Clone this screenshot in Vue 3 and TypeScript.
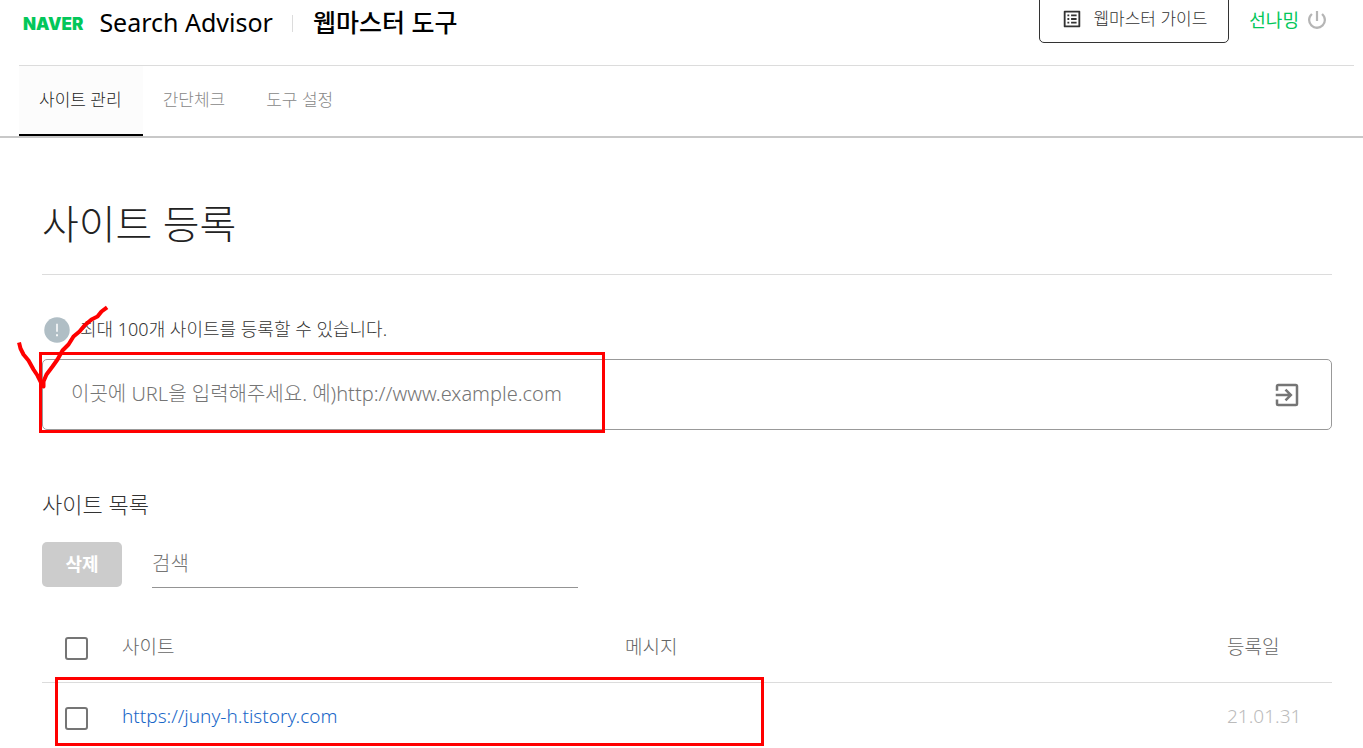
<script setup lang="ts">
import { ref } from 'vue'

interface Tab {
  label: string
  active: boolean
}
interface Site {
  url: string
  message: string
  date: string
}

const tabs: Tab[] = [
  { label: '사이트 관리', active: true },
  { label: '간단체크', active: false },
  { label: '도구 설정', active: false },
]
const sites: Site[] = [{ url: 'https://juny-h.tistory.com', message: '', date: '21.01.31' }]
const siteUrl = ref('')
const keyword = ref('')
</script>

<template>
  <div class="page">
    <header class="header">
      <div class="topbar">
        <a class="logo" href="#">NAVER</a>
        <a class="service" href="#">Search Advisor</a>
        <span class="divider"></span>
        <a class="tool" href="#">웹마스터 도구</a>
        <a class="guide" href="#">
          <svg width="22" height="22" viewBox="0 0 24 24" aria-hidden="true">
            <path fill="#333" d="M11 7h6v2h-6zm0 4h6v2h-6zm0 4h6v2h-6zM7 7h2v2H7zm0 4h2v2H7zm0 4h2v2H7zM20.1 3H3.9c-.5 0-.9.4-.9.9v16.2c0 .4.4.9.9.9h16.2c.4 0 .9-.5.9-.9V3.9c0-.5-.5-.9-.9-.9zM19 19H5V5h14z" />
          </svg>
          <span>웹마스터 가이드</span>
        </a>
        <a class="user" href="#">선나밍</a>
        <button class="power" type="button" aria-label="로그아웃">
          <svg width="24" height="24" viewBox="0 0 24 24" aria-hidden="true">
            <path fill="#b5b5b5" d="M13.100 3h-2.200v10h2.200zm4.730 2.170-1.560 1.560A6.700 6.700 0 0 1 18.700 12a6.700 6.700 0 1 1-10.970-5.270L6.170 5.170A8.932 8.932 0 0 0 3 12a9 9 0 0 0 18 0c0-2.740-1.230-5.180-3.170-6.830z" />
          </svg>
        </button>
      </div>
      <nav class="tabs">
        <a v-for="tab in tabs" :key="tab.label" href="#" class="tab" :class="{ active: tab.active }">{{ tab.label }}</a>
      </nav>
    </header>

    <main class="content">
      <h1 class="title">사이트 등록</h1>

      <p class="notice">
        <svg width="30" height="30" viewBox="0 0 24 24" aria-hidden="true">
          <circle cx="12" cy="12" r="10.2" fill="#b0bec5" />
          <path fill="#fff" d="M11.4 7h1.2v6.4h-1.2zM11.3 15.3h1.4v1.6h-1.4z" />
        </svg>
        <span>최대 100개 사이트를 등록할 수 있습니다.</span>
      </p>

      <form class="field" @submit.prevent>
        <input v-model="siteUrl" class="url" type="text" aria-label="사이트 URL" placeholder="이곳에 URL을 입력해주세요. 예)http://www.example.com" />
        <button class="enter" type="submit" aria-label="등록">
          <svg width="30" height="30" viewBox="0 0 24 24" aria-hidden="true">
            <path fill="#757575" d="M19 3H5a2 2 0 0 0-2 2v3.500h2V5h14v14H5v-3.500H3V19a2 2 0 0 0 2 2h14a2 2 0 0 0 2-2V5a2 2 0 0 0-2-2zm-8.920 12.590L11.500 17l5-5-5-5-1.420 1.410L12.670 11H3v2h9.670z" />
          </svg>
        </button>
      </form>

      <h2 class="subtitle">사이트 목록</h2>

      <div class="toolbar">
        <button class="remove" type="button">삭제</button>
        <input v-model="keyword" class="search" type="text" aria-label="검색" placeholder="검색" />
      </div>

      <table class="sites">
        <colgroup>
          <col class="col-check" />
          <col class="col-site" />
          <col />
          <col class="col-date" />
        </colgroup>
        <thead>
          <tr>
            <th class="check"><input type="checkbox" aria-label="전체 선택" /></th>
            <th>사이트</th>
            <th>메시지</th>
            <th>등록일</th>
          </tr>
        </thead>
        <tbody>
          <tr v-for="site in sites" :key="site.url">
            <td class="check"><input type="checkbox" :aria-label="site.url" /></td>
            <td><a class="link" :href="site.url">{{ site.url }}</a></td>
            <td>{{ site.message }}</td>
            <td class="date">{{ site.date }}</td>
          </tr>
        </tbody>
      </table>
    </main>

    <!-- Hand-drawn marks laid over the page -->
    <svg class="marks" width="780" height="748" viewBox="0 0 780 748" fill="none" stroke="#ff0000" aria-hidden="true">
      <rect x="40.500" y="353.500" width="563" height="78" stroke-width="3" />
      <rect x="56.500" y="678.500" width="706" height="66" stroke-width="3" />
      <path stroke-width="4" stroke-linecap="square" stroke-linejoin="round" d="M19.500 344.500l1 4 3 6 5 6 5 9 4 6 4 8 2 3v-5l3-7 6-8 5-7 5-9 6-6 5-8 6-5 5-6 7-6 6-3 4-5 4-3" />
    </svg>
  </div>
</template>

<style>
body {
  margin: 0;
  background: #fff;
}
</style>

<style scoped>
.page {
  position: relative;
  overflow: hidden;
  font-family: "Noto Sans", "Noto Sans CJK KR", sans-serif;
  font-weight: 300;
  color: #333;
}
a {
  color: inherit;
  text-decoration: none;
}
button {
  padding: 0;
  border: 0;
  background: none;
  font: inherit;
}
svg {
  display: block;
  flex: none;
}
input {
  font: inherit;
  color: inherit;
}
.header {
  padding-left: 19px;
  border-bottom: 2px solid #c8c8c8;
}
.topbar {
  display: flex;
  align-items: center;
  box-sizing: border-box;
  height: 66px;
  margin-right: 9px;
  padding: 0 25px 22px 4px;
  border-bottom: 1px solid #dcdcdc;
  line-height: 24px;
}
.logo {
  margin-top: 4px;
  font: 900 17px/24px Inter, sans-serif;
  color: #03c75a;
}
.service {
  margin-left: 16px;
  font-size: 25px;
  font-weight: 400;
  color: #000;
}
.divider {
  width: 1px;
  height: 17px;
  margin: 4px 20px 0 19px;
  background: #dcdcdc;
}
.tool {
  font-size: 25px;
  font-weight: 500;
  color: #000;
}
.guide {
  display: flex;
  align-items: center;
  gap: 10px;
  box-sizing: border-box;
  height: 48px;
  margin-left: auto;
  margin-top: -5px;
  padding: 0 21px;
  border: 1px solid #333;
  border-radius: 5px;
  font-size: 17px;
}
.user {
  margin: 0 6px 4px 20px;
  font-size: 18px;
  font-weight: 400;
  color: #03c75a;
}
.power {
  margin-bottom: 4px;
}
.tabs {
  display: flex;
}
.tab {
  padding: 0 21px 0 20px;
  border-bottom: 2px solid transparent;
  font-size: 17px;
  line-height: 68px;
  color: #888;
}
.tab.active {
  border-color: #000;
  background: #fcfcfc;
  color: #222;
}
.content {
  padding: 50px 31px 0 42px;
}
.title {
  margin: 0;
  padding-bottom: 14px;
  border-bottom: 1px solid #dcdcdc;
  font-size: 40px;
  font-weight: 300;
  line-height: 72px;
  color: #222;
}
.notice {
  display: flex;
  align-items: center;
  gap: 8px;
  margin: 40px 0 14px;
  font-size: 18px;
  line-height: 28px;
}
.notice span {
  padding-bottom: 2px;
}
.field {
  display: flex;
  align-items: center;
  box-sizing: border-box;
  height: 71px;
  padding: 0 29px 0 28px;
  border: 1px solid #999;
  border-radius: 5px;
}
.url {
  flex: 1;
  min-width: 0;
  padding: 0 0 2px;
  border: 0;
  outline: 0;
  background: none;
  font-size: 20px;
}
.url::placeholder,
.search::placeholder {
  color: #757575;
  opacity: 1;
}
.subtitle {
  margin: 56px 0 20px;
  font-size: 22px;
  font-weight: 300;
  line-height: 36px;
}
.toolbar {
  display: flex;
  gap: 30px;
}
.remove {
  width: 80px;
  height: 45px;
  padding-bottom: 3px;
  border-radius: 5px;
  background: #ccc;
  font-size: 18px;
  font-weight: 700;
  color: #fff;
}
.search {
  box-sizing: border-box;
  width: 33%;
  height: 46px;
  padding: 0 0 3px;
  border: 0;
  border-bottom: 1px solid #949494;
  border-radius: 0;
  outline: 0;
  background: none;
  font-size: 20px;
}
.sites {
  width: 100%;
  margin-top: 24px;
  border-collapse: collapse;
  table-layout: fixed;
  font-size: 19px;
}
.col-check {
  width: 80px;
}
.col-site {
  width: 39%;
}
.col-date {
  width: 105px;
}
th,
td {
  height: 66px;
  padding: 0 0 2px;
  text-align: left;
  font-weight: 300;
  color: #666;
}
th {
  height: 68px;
  border-bottom: 1px solid #dcdcdc;
}
.check {
  padding: 2px 0 0 23px;
}
.check input {
  display: block;
  appearance: none;
  box-sizing: border-box;
  width: 23px;
  height: 23px;
  margin: 0;
  border: 2px solid #757575;
  border-radius: 3px;
}
td .link {
  color: #1967c8;
}
td.date {
  color: #bbb;
}
.marks {
  position: absolute;
  top: 0;
  left: 0;
  pointer-events: none;
}
</style>
